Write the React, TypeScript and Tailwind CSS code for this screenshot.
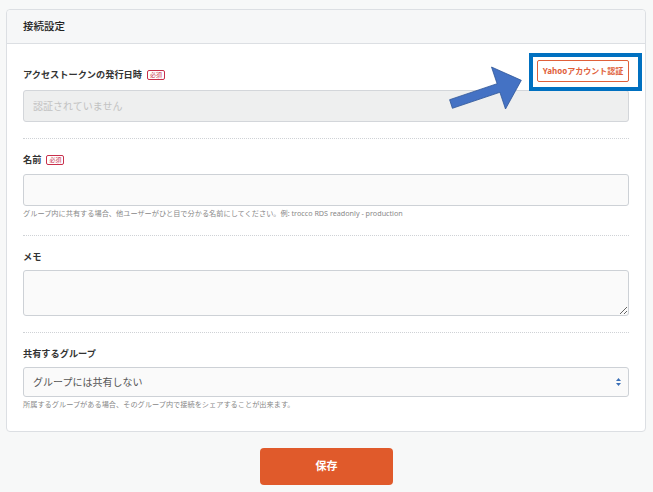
import { useState } from 'react';

function Required() {
  return (
    <span className="ml-[5px] inline-flex h-[10px] items-center rounded-[2px] border border-[#c9304b] px-[2px] text-[6px] leading-none font-normal text-[#c9304b]">
      必須
    </span>
  );
}

function Label({ text, required }: { text: string; required?: boolean }) {
  return (
    <label className="flex items-center text-[9.2px] leading-[14px] font-bold text-[#333]">
      {text}
      {required && <Required />}
    </label>
  );
}

export default function App() {
  const [name, setName] = useState('');
  const [memo, setMemo] = useState('');
  const [group, setGroup] = useState('none');

  return (
    <div className="relative min-h-[492px] bg-[#f7f8f8] px-[6px] pt-[9px] font-['Noto_Sans','Noto_Sans_CJK_JP',sans-serif]">
      <div className="mr-px rounded-[4px] border border-[#dcdfe3] bg-white">
        {/* ヘッダー */}
        <div className="flex h-[34px] items-center rounded-t-[4px] border-b border-[#dcdfe3] bg-[#f6f7f8] px-4">
          <h2 className="text-[10.5px] font-medium text-[#222]">接続設定</h2>
        </div>

        <div className="px-4">
          {/* アクセストークン */}
          <div className="border-b border-dotted border-[#cfd2d6] pt-4 pb-4">
            <div className="flex items-end justify-between">
              <Label text="アクセストークンの発行日時" required />
              <button className="h-[22px] w-[92px] rounded-[2px] border border-[#e0603a] bg-white text-[8px] font-bold text-[#e0603a]">
                Yahooアカウント認証
              </button>
            </div>
            <input
              disabled
              placeholder="認証されていません"
              className="mt-2 h-8 w-full rounded-[3px] border border-[#d3d6da] bg-[#eeefef] px-[9px] text-[10px] placeholder:text-[#c2c2c2] outline-none"
            />
          </div>

          {/* 名前 */}
          <div className="border-b border-dotted border-[#cfd2d6] pt-[14px] pb-[17px]">
            <Label text="名前" required />
            <input
              value={name}
              onChange={(e) => setName(e.target.value)}
              className="mt-[7px] h-8 w-full rounded-[3px] border border-[#cdd1d6] bg-[#fafafa] px-[9px] text-[10px] outline-none"
            />
            <p className="mt-[2px] text-[7.2px] leading-[10px] text-[#888]">
              グループ内に共有する場合、他ユーザーがひと目で分かる名前にしてください。例: trocco RDS readonly - production
            </p>
          </div>

          {/* メモ */}
          <div className="border-b border-dotted border-[#cfd2d6] pt-[14px] pb-4">
            <Label text="メモ" />
            <textarea
              value={memo}
              onChange={(e) => setMemo(e.target.value)}
              className="mt-[6px] block h-[46px] w-full rounded-[3px] border border-[#cdd1d6] bg-[#fafafa] px-[9px] py-1 text-[10px] outline-none"
            />
          </div>

          {/* 共有するグループ */}
          <div className="pt-[14px] pb-[22px]">
            <Label text="共有するグループ" />
            <div className="relative mt-[6px]">
              <select
                value={group}
                onChange={(e) => setGroup(e.target.value)}
                className="h-[30px] w-full appearance-none rounded-[3px] border border-[#cdd1d6] bg-[#fafafa] px-[9px] text-[10px] text-[#555] outline-none"
              >
                <option value="none">グループには共有しない</option>
              </select>
              <svg className="pointer-events-none absolute top-[10px] right-[8px]" width="5" height="10" viewBox="0 0 5 10">
                <path d="M2.5 1 L5 4 L0 4 Z" fill="#3b6fb6" />
                <path d="M0 6 L5 6 L2.5 9 Z" fill="#3b6fb6" />
              </svg>
            </div>
            <p className="mt-[2px] text-[7.2px] leading-[10px] text-[#888]">
              所属するグループがある場合、そのグループ内で接続をシェアすることが出来ます。
            </p>
          </div>
        </div>
      </div>

      <div className="flex justify-center pt-4">
        <button className="h-[37px] w-[133px] rounded-[4px] bg-[#e05a2b] text-[11px] font-bold text-white">
          保存
        </button>
      </div>

      {/* 注釈: 青枠と矢印 */}
      <div className="pointer-events-none absolute top-[53px] left-[529px] h-[38px] w-[113px] border-4 border-[#0070c0]" />
      <svg className="pointer-events-none absolute top-0 left-0" width="653" height="492">
        <polygon
          points="449.6,99.7 497.1,83.7 491.5,67 521.3,80.3 505.5,109 499.9,92.3 452.4,108.3"
          fill="#4472c4"
          stroke="#2f5597"
          strokeWidth="0.8"
        />
      </svg>
    </div>
  );
}
